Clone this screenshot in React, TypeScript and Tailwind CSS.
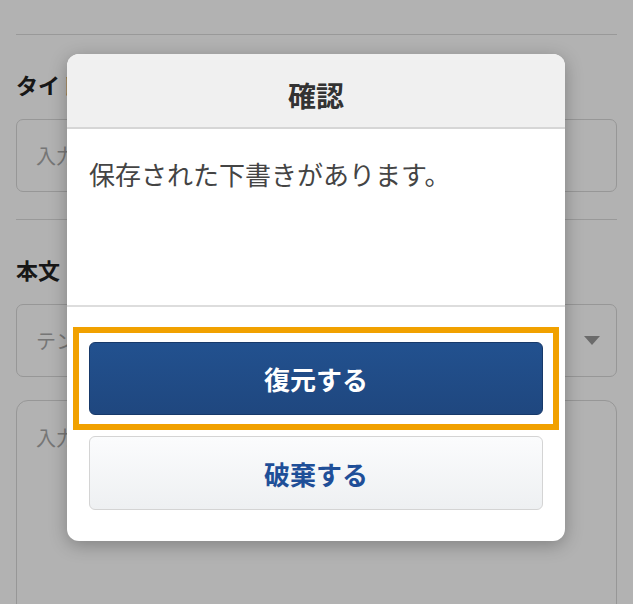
import React from "react";

function Field({ label, children }: { label: string; children: React.ReactNode }) {
  return (
    <section className="border-t border-[#dcdcdc] pt-[33px] pb-[27px]">
      <h2 className="h-[32px] text-[22px] leading-[32px] font-bold text-[#222]">{label}</h2>
      <div className="mt-[19px] flex flex-col gap-[23px]">{children}</div>
    </section>
  );
}

export default function App() {
  return (
    <div className="relative h-[604px] w-[633px] overflow-hidden bg-white font-['Noto_Sans_CJK_JP',sans-serif]">
      {/* page behind the dialog */}
      <div className="px-4 pt-[34px]">
        <Field label="タイトル">
          <div className="flex h-[73px] items-center rounded-[7px] border border-[#d8d8d8] px-[19px] text-[20px] text-[#aaaaaa]">
            入力してください
          </div>
        </Field>
        <Field label="本文">
          <div className="flex h-[73px] items-center justify-between rounded-[7px] border border-[#d8d8d8] pl-[19px] pr-[16px] text-[20px] text-[#aaaaaa]">
            <span>テンプレートを選択</span>
            <svg width="16" height="9" viewBox="0 0 16 9">
              <path d="M0 0h16L8 9z" fill="#9a9a9a" />
            </svg>
          </div>
          <div className="h-[260px] rounded-[12px] border border-[#d8d8d8] px-[19px] pt-[22px] text-[20px] text-[#aaaaaa]">
            入力してください
          </div>
        </Field>
      </div>

      {/* overlay */}
      <div className="absolute inset-0 bg-black/30" />

      {/* dialog */}
      <div className="absolute left-[67px] top-[54px] w-[498px] rounded-[12px] bg-white shadow-[0_4px_18px_rgba(0,0,0,0.28)]">
        <div className="flex h-[75px] items-center justify-center rounded-t-[12px] border-b-2 border-[#d6d6d6] bg-[#f0f0f0] pt-[8px]">
          <h1 className="text-[28px] font-bold text-[#333]">確認</h1>
        </div>
        <div className="h-[178px] border-b-2 border-[#dddddd] px-[22px] pt-[25px] text-[26px] leading-[40px] text-[#444]">
          保存された下書きがあります。
        </div>
        <div className="flex flex-col gap-[21px] px-[22px] pt-[35px] pb-[31px]">
          <div className="relative">
            <button className="flex h-[73px] w-full items-center justify-center rounded-[6px] border border-[#17396a] bg-gradient-to-b from-[#22518f] to-[#1f477f] text-[26px] font-bold text-white">
              復元する
            </button>
            <div className="pointer-events-none absolute -left-[16px] -right-[16px] -top-[15px] -bottom-[15px] border-[6px] border-[#f1a100]" />
          </div>
          <button className="flex h-[74px] w-full items-center justify-center rounded-[6px] border border-[#d4d4d4] bg-gradient-to-b from-[#fbfcfd] to-[#eef0f2] text-[26px] font-bold text-[#1f4f98]">
            破棄する
          </button>
        </div>
      </div>
    </div>
  );
}
